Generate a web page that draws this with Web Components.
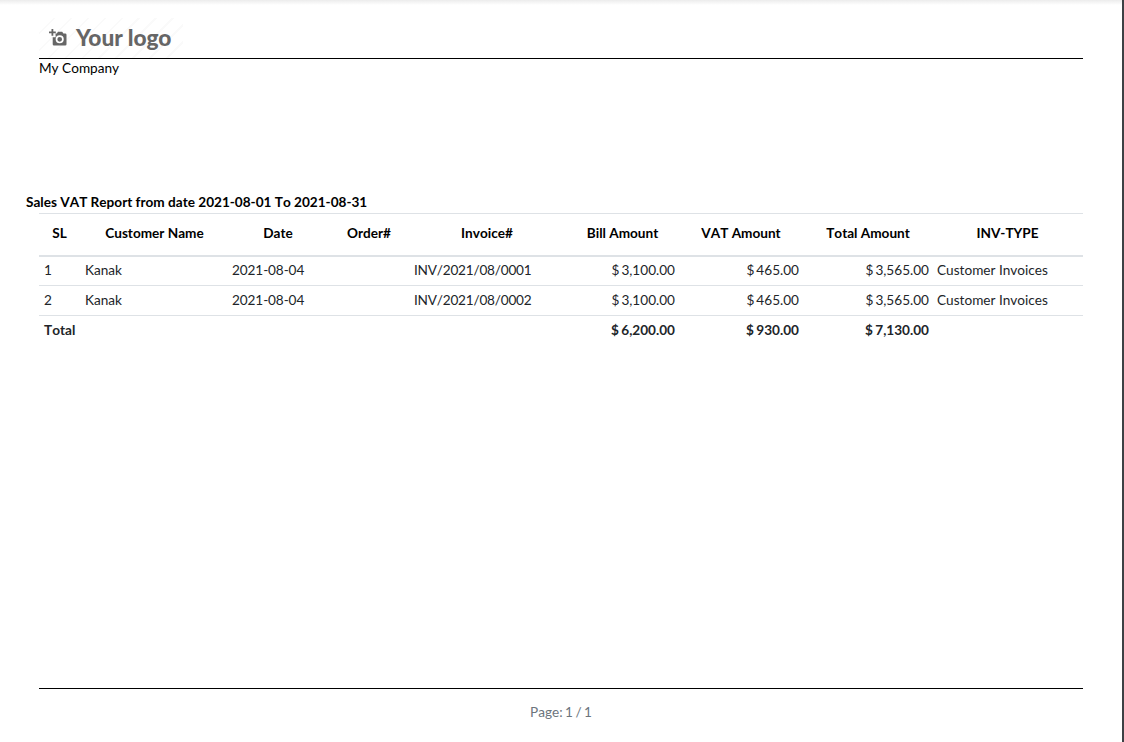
<!DOCTYPE html>
<html>
<head>
<meta charset="utf-8">
<title>Sales VAT Report</title>
<style>
    html, body { margin: 0; padding: 0; background: #ffffff; }
</style>
</head>
<body>
<report-page>
    <report-header slot="header" company="My Company"></report-header>
    <report-table title-text="Sales VAT Report from date 2021-08-01 To 2021-08-31"></report-table>
    <report-footer slot="footer" page="Page: 1 / 1"></report-footer>
</report-page>

<script>
const rows = [
    ['1', 'Kanak', '2021-08-04', '', 'INV/2021/08/0001', '$ 3,100.00', '$ 465.00', '$ 3,565.00', 'Customer Invoices'],
    ['2', 'Kanak', '2021-08-04', '', 'INV/2021/08/0002', '$ 3,100.00', '$ 465.00', '$ 3,565.00', 'Customer Invoices']
];
const heads = ['SL', 'Customer Name', 'Date', 'Order#', 'Invoice#', 'Bill Amount', 'VAT Amount', 'Total Amount', 'INV-TYPE'];
const widths = [41, 147, 102, 80, 156, 115, 124, 130, 149];

class ReportPage extends HTMLElement {
    constructor() {
        super();
        this.attachShadow({ mode: 'open' });
    }

    connectedCallback() {
        this.shadowRoot.innerHTML = `
            <style>
                :host {
                    display: flex;
                    flex-direction: column;
                    box-sizing: border-box;
                    height: 742px;
                    padding: 0 39px;
                    border-right: 2px solid #3d4145;
                    font-family: Lato, "Liberation Sans", sans-serif;
                    font-size: 13.6px;
                    font-kerning: none;
                    color: #212529;
                    background: linear-gradient(#ececec, #ffffff 5px);
                }
                .main { flex: 1; }
            </style>
            <slot name="header"></slot>
            <div class="main"><slot></slot></div>
            <slot name="footer"></slot>
        `;
    }
}

class ReportHeader extends HTMLElement {
    constructor() {
        super();
        this.attachShadow({ mode: 'open' });
    }

    connectedCallback() {
        this.shadowRoot.innerHTML = `
            <style>
                :host { display: block; padding-top: 18px; }
                .logo {
                    display: flex;
                    align-items: center;
                    gap: 9px;
                    box-sizing: border-box;
                    width: 144px;
                    height: 40px;
                    padding: 0 0 2px 10px;
                    background: repeating-linear-gradient(135deg, #ffffff 0 10px, #fafafa 10px 12px);
                    color: #666666;
                    font-size: 22.700px;
                    font-weight: 900;
                    font-kerning: normal;
                }
                svg { display: block; flex: none; position: relative; top: 1px; }
                .company {
                    border-top: 1px solid #000000;
                    color: #000000;
                    line-height: 18px;
                }
            </style>
            <div class="logo">
                <svg width="18" height="18" viewBox="0 0 18 18">
                    <path d="M2.500 0h1.800v2.500h2.500v1.800H4.300v2.500H2.500V4.300H0V2.500h2.500z" fill="#666666"/>
                    <path d="M6.500 4.500h1.300L9 2.800h4.200l1.200 1.700h1.800a1.300 1.300 0 0 1 1.300 1.300v9.400a1.300 1.300 0 0 1-1.300 1.300H5a1.300 1.300 0 0 1-1.300-1.300V8.300h3z" fill="#666666"/>
                    <circle cx="10.700" cy="10.300" r="3.200" fill="none" stroke="#ffffff" stroke-width="1.700"/>
                </svg>
                <span>Your logo</span>
            </div>
            <div class="company">${this.getAttribute('company')}</div>
        `;
    }
}

class ReportTable extends HTMLElement {
    constructor() {
        super();
        this.attachShadow({ mode: 'open' });
    }

    connectedCallback() {
        const cols = widths.map(w => `<col style="width:${w}px">`).join('');
        const head = heads.map((h, i) => `<th class="h${i}">${h}</th>`).join('');
        const body = rows.map(r => `<tr>${r.map((v, i) => `<td class="c${i}">${v}</td>`).join('')}</tr>`).join('');

        this.shadowRoot.innerHTML = `
            <style>
                :host { display: block; padding-top: 116px; }
                h4 {
                    margin: 0 0 2px -13px;
                    font-size: inherit;
                    font-weight: 700;
                    line-height: 18px;
                    color: #000000;
                }
                table {
                    width: 1044px;
                    table-layout: fixed;
                    border-collapse: collapse;
                    border-top: 1px solid #dee2e6;
                    font-size: inherit;
                    font-kerning: none;
                }
                th {
                    box-sizing: border-box;
                    height: 42px;
                    padding: 0 5px 2px;
                    text-align: center;
                    font-weight: 700;
                    color: #000000;
                    border-bottom: 2px solid #dee2e6;
                    white-space: nowrap;
                }
                th.h1 { padding-left: 6px; padding-right: 4px; }
                th.h6, th.h7, th.h8 { padding-left: 4px; padding-right: 6px; }
                td {
                    box-sizing: border-box;
                    height: 30px;
                    padding: 0 5px 1px;
                    border-bottom: 1px solid #dee2e6;
                    white-space: nowrap;
                }
                tr.total td { border-bottom: 0; font-weight: 700; }
                .c2 { letter-spacing: -0.1px; }
                .c4 { letter-spacing: -0.2px; }
                .c5, .c6, .c7 { text-align: right; word-spacing: -1.500px; }
                tr.total .c5, tr.total .c6, tr.total .c7 { word-spacing: -0.800px; }
                .c8 { padding-left: 3px; }
            </style>
            <h4>${this.getAttribute('title-text')}</h4>
            <table>
                <colgroup>${cols}</colgroup>
                <thead><tr>${head}</tr></thead>
                <tbody>
                    ${body}
                    <tr class="total">
                        <td>Total</td><td></td><td></td><td></td><td></td>
                        <td class="c5">$ 6,200.00</td>
                        <td class="c6">$ 930.00</td>
                        <td class="c7">$ 7,130.00</td>
                        <td></td>
                    </tr>
                </tbody>
            </table>
        `;
    }
}

class ReportFooter extends HTMLElement {
    constructor() {
        super();
        this.attachShadow({ mode: 'open' });
    }

    connectedCallback() {
        this.shadowRoot.innerHTML = `
            <style>
                :host {
                    display: block;
                    height: 54px;
                    box-sizing: border-box;
                    border-top: 1px solid #000000;
                    padding-top: 14px;
                    text-align: center;
                    color: #6c757d;
                    line-height: 19px;
                    word-spacing: -1px;
                }
            </style>
            ${this.getAttribute('page')}
        `;
    }
}

customElements.define('report-page', ReportPage);
customElements.define('report-header', ReportHeader);
customElements.define('report-table', ReportTable);
customElements.define('report-footer', ReportFooter);
</script>
</body>
</html>
